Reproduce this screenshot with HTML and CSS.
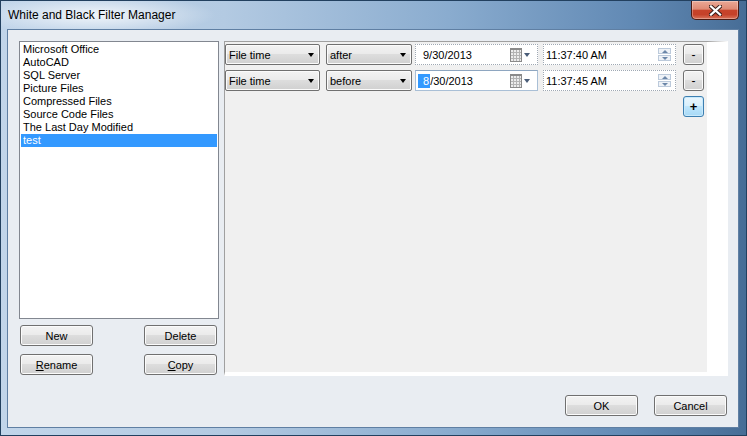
FILE: index.html
```html
<!DOCTYPE html>
<html lang="en">
  <head>
    <meta charset="UTF-8" />
    <meta name="viewport" content="width=device-width, initial-scale=1.0" />
    <title>White and Black Filter Manager</title>
    <link rel="stylesheet" href="styles.css">
  </head>
  <body>
    <div class="window">
      <div class="titlebar">
        <span class="title">White and Black Filter Manager</span>
        <button class="close" aria-label="Close">
          <svg width="13" height="11" viewBox="0 0 13 11" aria-hidden="true">
            <path d="M2 1.5 L11 9.5 M11 1.5 L2 9.5" stroke="#3a1d18" stroke-width="4.2" stroke-linecap="square" />
            <path d="M2 1.5 L11 9.5 M11 1.5 L2 9.5" stroke="#fff" stroke-width="2.3" stroke-linecap="square" />
          </svg>
        </button>
      </div>

      <div class="client">
        <div class="main">
          <div class="side">
            <ul class="list">
              <li>Microsoft Office</li>
              <li>AutoCAD</li>
              <li>SQL Server</li>
              <li>Picture Files</li>
              <li>Compressed Files</li>
              <li>Source Code Files</li>
              <li>The Last Day Modified</li>
              <li class="selected">test</li>
            </ul>
            <div class="side-buttons">
              <button class="btn">New</button>
              <button class="btn">Delete</button>
              <button class="btn"><u>R</u>ename</button>
              <button class="btn"><u>C</u>opy</button>
            </div>
          </div>

          <div class="panel">
            <div class="rule">
              <div class="combo combo-field">File time <span class="arrow"></span></div>
              <div class="combo combo-op">after <span class="arrow"></span></div>
              <div class="field date">
                <span class="value">9/30/2013</span>
                <span class="cal"></span>
                <span class="cal-arrow"></span>
              </div>
              <div class="field time">
                <span class="value">11:37:40 AM</span>
                <span class="spin"><i class="up"></i><i class="down"></i></span>
              </div>
              <button class="btn small">-</button>
            </div>
            <div class="rule">
              <div class="combo combo-field">File time <span class="arrow"></span></div>
              <div class="combo combo-op">before <span class="arrow"></span></div>
              <div class="field date focused">
                <span class="value"><span class="sel">8</span>/30/2013</span>
                <span class="cal"></span>
                <span class="cal-arrow"></span>
              </div>
              <div class="field time">
                <span class="value">11:37:45 AM</span>
                <span class="spin"><i class="up"></i><i class="down"></i></span>
              </div>
              <button class="btn small">-</button>
            </div>
            <div class="rule add-row">
              <button class="btn small hot">+</button>
            </div>
          </div>
        </div>

        <div class="footer">
          <button class="btn">OK</button>
          <button class="btn">Cancel</button>
        </div>
      </div>
    </div>
  </body>
</html>
```

FILE: styles.css
```css
html, body {
  margin: 0;
  padding: 0;
}

body {
  font-family: "Liberation Sans", Arial, sans-serif;
  font-size: 11px;
  color: #000;
  background: #4a6f97;
}

.window {
  box-sizing: border-box;
  width: 747px;
  height: 436px;
  padding: 0 7px 7px 6px;
  border: 1px solid #22405f;
  background:
    radial-gradient(ellipse 120px 20px at 95px 14px, rgba(255, 255, 255, 0.8), rgba(255, 255, 255, 0)),
    linear-gradient(to right, #c1d5ea 0%, #b3cae2 30%, #8aaccf 60%, #6189b4 85%, #476d96 100%);
  display: flex;
  flex-direction: column;
}

.titlebar {
  height: 28px;
  display: flex;
  justify-content: space-between;
  align-items: flex-start;
}

.title {
  font-family: "Liberation Sans", Arial, sans-serif;
  font-size: 12px;
  line-height: 16px;
  padding: 6px 0 0 1px;
}

.close {
  width: 48px;
  height: 19px;
  padding: 0;
  border: 1px solid #4b1a12;
  border-top: none;
  border-radius: 0 0 5px 5px;
  background: linear-gradient(#eaa896 0%, #df8a74 45%, #c7432a 52%, #c54129 75%, #d8735a 100%);
  box-shadow: inset 0 0 0 1px rgba(255, 255, 255, 0.3);
  display: flex;
  align-items: center;
  justify-content: center;
}

.client {
  box-sizing: border-box;
  width: 732px;
  height: 399px;
  border: 1px solid #5f7fa3;
  background: #e9edf2;
  padding: 11px 11px 0 11px;
}

.main {
  display: grid;
  grid-template-columns: 200px 504px;
  column-gap: 5px;
  height: 335px;
}

.side {
  display: flex;
  flex-direction: column;
}

.list {
  box-sizing: border-box;
  height: 278px;
  margin: 0;
  padding: 1px;
  list-style: none;
  background: #fff;
  border: 1px solid #828790;
}

.list li {
  height: 13px;
  line-height: 13px;
  padding-left: 2px;
  white-space: nowrap;
}

.list li.selected {
  background: #3399ff;
  color: #fff;
}

.side-buttons {
  margin-top: 6px;
  padding: 0 2px 0 1px;
  display: grid;
  grid-template-columns: 73px 73px;
  justify-content: space-between;
  row-gap: 8px;
}

.btn {
  box-sizing: border-box;
  width: 73px;
  height: 21px;
  padding: 0;
  font: inherit;
  color: #000;
  border: 1px solid #707070;
  border-radius: 3px;
  background: linear-gradient(#f3f3f3 0%, #ebebeb 45%, #dddddd 50%, #d0d0d0 100%);
  box-shadow: inset 0 0 0 1px #fbfbfb;
}

.btn u {
  text-decoration: underline;
}

.btn.small {
  width: 21px;
  font-size: 12px;
}

.btn.hot {
  border-color: #3c7fb1;
  background: linear-gradient(#eaf6fd 0%, #d9f0fc 45%, #bee6fd 50%, #a7d9f5 100%);
  box-shadow: inset 0 0 0 1px #c9e9fb;
  font-size: 13px;
  font-weight: bold;
}

.panel {
  box-sizing: border-box;
  background: #f0f0f0;
  border-top: 1px solid #a0a0a0;
  border-left: 1px solid #a0a0a0;
  border-right: 21px solid #fff;
  border-bottom: 4px solid #fff;
  padding: 2px 3px 0 0;
  display: flex;
  flex-direction: column;
  row-gap: 5px;
}

.rule {
  display: flex;
  height: 21px;
}

.add-row {
  justify-content: flex-end;
}

.combo {
  box-sizing: border-box;
  height: 21px;
  display: flex;
  align-items: center;
  justify-content: space-between;
  padding: 0 5px 0 3px;
  border: 1px solid #707070;
  border-radius: 2px;
  background: linear-gradient(#f3f3f3 0%, #ebebeb 45%, #dddddd 50%, #d0d0d0 100%);
  box-shadow: inset 0 0 0 1px #fbfbfb;
}

.combo-field {
  width: 95px;
  margin-right: 6px;
}

.combo-op {
  width: 86px;
  margin-right: 3px;
}

.arrow {
  width: 0;
  height: 0;
  border-top: 4px solid #000;
  border-left: 3.5px solid transparent;
  border-right: 3.5px solid transparent;
}

.field {
  box-sizing: border-box;
  height: 21px;
  background: #fff;
  border: 1px dotted #9fa8b3;
  display: flex;
  align-items: center;
}

.field.focused {
  border: 1px solid #a9bfd6;
  border-top-color: #8ea6c0;
}

.date {
  width: 123px;
  margin-right: 5px;
  padding: 0 7px 0 7px;
}

.time {
  width: 133px;
  margin-right: 7px;
  padding: 0 4px 0 2px;
}

.value {
  flex: 1;
}

.sel {
  background: #3399ff;
  color: #fff;
  margin-left: -5px;
  padding: 1px 1px 1px 5px;
}

.cal {
  width: 10px;
  height: 11px;
  border: 1px solid #8a8a8a;
  border-top-width: 2px;
  background:
    linear-gradient(to right, transparent 2px, #b3b3b3 2px, #b3b3b3 3px, transparent 3px, transparent 5px, #b3b3b3 5px, #b3b3b3 6px, transparent 6px, transparent 8px, #b3b3b3 8px, #b3b3b3 9px, transparent 9px),
    linear-gradient(transparent 2px, #b3b3b3 2px, #b3b3b3 3px, transparent 3px, transparent 5px, #b3b3b3 5px, #b3b3b3 6px, transparent 6px, transparent 8px, #b3b3b3 8px, #b3b3b3 9px, transparent 9px),
    #ececec;
  margin-right: 2px;
}

.cal-arrow {
  width: 0;
  height: 0;
  border-top: 4px solid #4a5d78;
  border-left: 3.5px solid transparent;
  border-right: 3.5px solid transparent;
}

.spin {
  display: flex;
  flex-direction: column;
  row-gap: 1px;
}

.spin i {
  box-sizing: border-box;
  display: flex;
  align-items: center;
  justify-content: center;
  width: 13px;
  height: 6px;
  border: 1px solid #bccadb;
  background: #eef2f7;
}

.spin i::before {
  content: "";
  width: 0;
  height: 0;
  border-left: 3px solid transparent;
  border-right: 3px solid transparent;
}

.spin .up::before {
  border-bottom: 3px solid #6b86a8;
}

.spin .down::before {
  border-top: 3px solid #6b86a8;
}

.footer {
  margin-top: 19px;
  display: flex;
  justify-content: flex-end;
  column-gap: 16px;
}
```
